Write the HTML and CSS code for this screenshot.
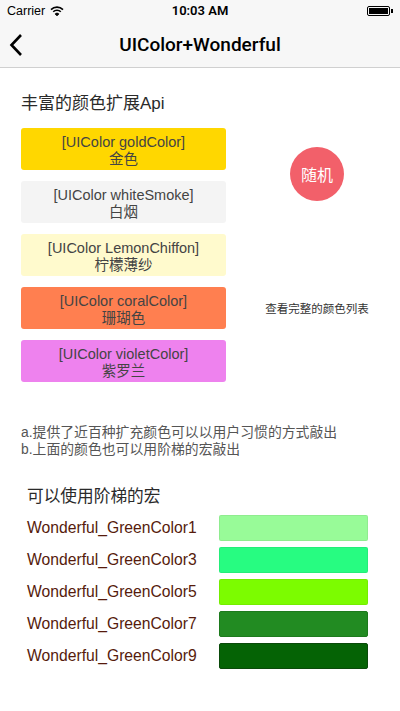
FILE: index.html
```html
<!DOCTYPE html>
<html>
<head>
<meta charset="utf-8">
<link rel="stylesheet" href="styles.css">
</head>
<body>
<div class="status">
  <div class="status-left">Carrier
    <svg class="wifi" width="14" height="10" viewBox="0 0 14 10">
      <path d="M1 3.6 A8.5 8.5 0 0 1 13 3.6" fill="none" stroke="#000" stroke-width="1.6"/>
      <path d="M3.2 5.8 A5.4 5.4 0 0 1 10.8 5.8" fill="none" stroke="#000" stroke-width="1.6"/>
      <path d="M5.2 7.9 A2.6 2.6 0 0 1 8.8 7.9 L7 9.8 Z" fill="#000" stroke="#000" stroke-width="1"/>
    </svg>
  </div>
  <div class="status-time">10:03 AM</div>
  <div class="status-right">
    <div class="battery"><div class="battery-fill"></div></div><div class="battery-tip"></div>
  </div>
</div>
<div class="nav">
  <svg class="back" width="14" height="24" viewBox="0 0 14 24">
    <path d="M12 2 L2.5 12 L12 22" fill="none" stroke="#000" stroke-width="2.6" stroke-linejoin="miter"/>
  </svg>
  <div class="nav-title">UIColor+Wonderful</div>
</div>
<main class="content">
  <h2 class="heading">丰富的颜色扩展Api</h2>
  <div class="top">
    <div class="btns">
      <div class="btn gold">[UIColor goldColor]<br>金色</div>
      <div class="btn smoke">[UIColor whiteSmoke]<br>白烟</div>
      <div class="btn lemon">[UIColor LemonChiffon]<br>柠檬薄纱</div>
      <div class="btn coral">[UIColor coralColor]<br>珊瑚色</div>
      <div class="btn violet">[UIColor violetColor]<br>紫罗兰</div>
    </div>
    <div class="side">
      <div class="random">随机</div>
      <div class="more">查看完整的颜色列表</div>
    </div>
  </div>
  <p class="desc">a.提供了近百种扩充颜色可以以用户习惯的方式敲出<br>b.上面的颜色也可以用阶梯的宏敲出</p>
  <h2 class="heading2">可以使用阶梯的宏</h2>
  <div class="rows">
    <div class="row"><span class="label">Wonderful_GreenColor1</span><span class="sw g1"></span></div>
    <div class="row"><span class="label">Wonderful_GreenColor3</span><span class="sw g3"></span></div>
    <div class="row"><span class="label">Wonderful_GreenColor5</span><span class="sw g5"></span></div>
    <div class="row"><span class="label">Wonderful_GreenColor7</span><span class="sw g7"></span></div>
    <div class="row"><span class="label">Wonderful_GreenColor9</span><span class="sw g9"></span></div>
  </div>
</main>
</body>
</html>
```

FILE: styles.css
```css
* { box-sizing: border-box; }
html, body { margin: 0; padding: 0; }
body {
  width: 400px;
  height: 711px;
  background: #fff;
  font-family: "Liberation Sans", "Noto Sans CJK SC", sans-serif;
  color: #333;
  overflow: hidden;
}
.status {
  height: 21px;
  background: #f7f7f7;
  display: flex;
  align-items: center;
  justify-content: space-between;
  padding: 0 7px 0 7px;
  font-size: 12.5px;
  color: #000;
}
.status-left { display: flex; align-items: center; gap: 5px; width: 100px; }
.status-time {
  font-weight: 600;
  font-family: "Roboto", "Liberation Sans", sans-serif;
  font-size: 13px;
}
.status-right { width: 100px; display: flex; justify-content: flex-end; align-items: center; }
.battery {
  width: 23px;
  height: 10px;
  border: 1px solid #000;
  border-radius: 2px;
  padding: 1px;
}
.battery-fill { width: 100%; height: 100%; background: #000; }
.battery-tip { width: 2px; height: 4px; background: #000; margin-left: 1px; }
.nav {
  height: 47px;
  background: #f7f7f7;
  border-bottom: 1px solid #d0d0d0;
  display: flex;
  align-items: center;
  justify-content: center;
  position: relative;
}
.back { position: absolute; left: 9px; top: 12px; }
.nav-title {
  font-family: "Roboto", "Liberation Sans", sans-serif;
  font-weight: 500;
  font-size: 19px;
  color: #000;
}
.content { padding: 24px 0 0 21px; }
.heading {
  margin: 0;
  font-size: 17px;
  font-weight: 400;
  line-height: 24px;
  color: #2a2a2a;
}
.top { display: flex; margin-top: 12px; }
.btns { width: 205px; display: flex; flex-direction: column; gap: 11px; }
.btn {
  height: 42px;
  border-radius: 3px;
  text-align: center;
  font-size: 14.5px;
  line-height: 17px;
  padding-top: 5.5px;
  color: #444;
}
.gold { background: #ffd700; }
.smoke { background: #f4f4f4; }
.lemon { background: #fffacd; }
.coral { background: #ff7f50; }
.violet { background: #ee82ee; }
.side {
  flex: 1;
  display: flex;
  flex-direction: column;
  align-items: center;
  padding-left: 8px;
}
.random {
  margin-top: 19px;
  width: 54px;
  height: 54px;
  border-radius: 50%;
  background: #f2606a;
  color: #fff;
  font-size: 16px;
  display: flex;
  align-items: center;
  justify-content: center;
}
.more {
  margin-top: 100px;
  font-size: 11.5px;
  line-height: 16px;
  color: #333;
}
.desc {
  margin: 42px 0 0 0;
  font-size: 13.85px;
  line-height: 17px;
  color: #555;
}
.heading2 {
  margin: 27px 0 0 6px;
  font-size: 16.7px;
  font-weight: 400;
  line-height: 24px;
  color: #2a2a2a;
}
.rows { margin: 6px 0 0 6px; display: flex; flex-direction: column; gap: 6px; }
.row { display: flex; align-items: center; height: 26px; }
.label {
  width: 192px;
  font-size: 15.7px;
  color: #561b0c;
}
.sw {
  width: 149px;
  height: 26px;
  border-radius: 2px;
  border: 1px solid rgba(0,0,0,0.06);
}
.g1 { background: #98fb98; }
.g3 { background: #27fc81; }
.g5 { background: #7cfc00; }
.g7 { background: #228b22; border-color: #1d7a1d; }
.g9 { background: #056305; border-color: #0a4a0a; }
```
